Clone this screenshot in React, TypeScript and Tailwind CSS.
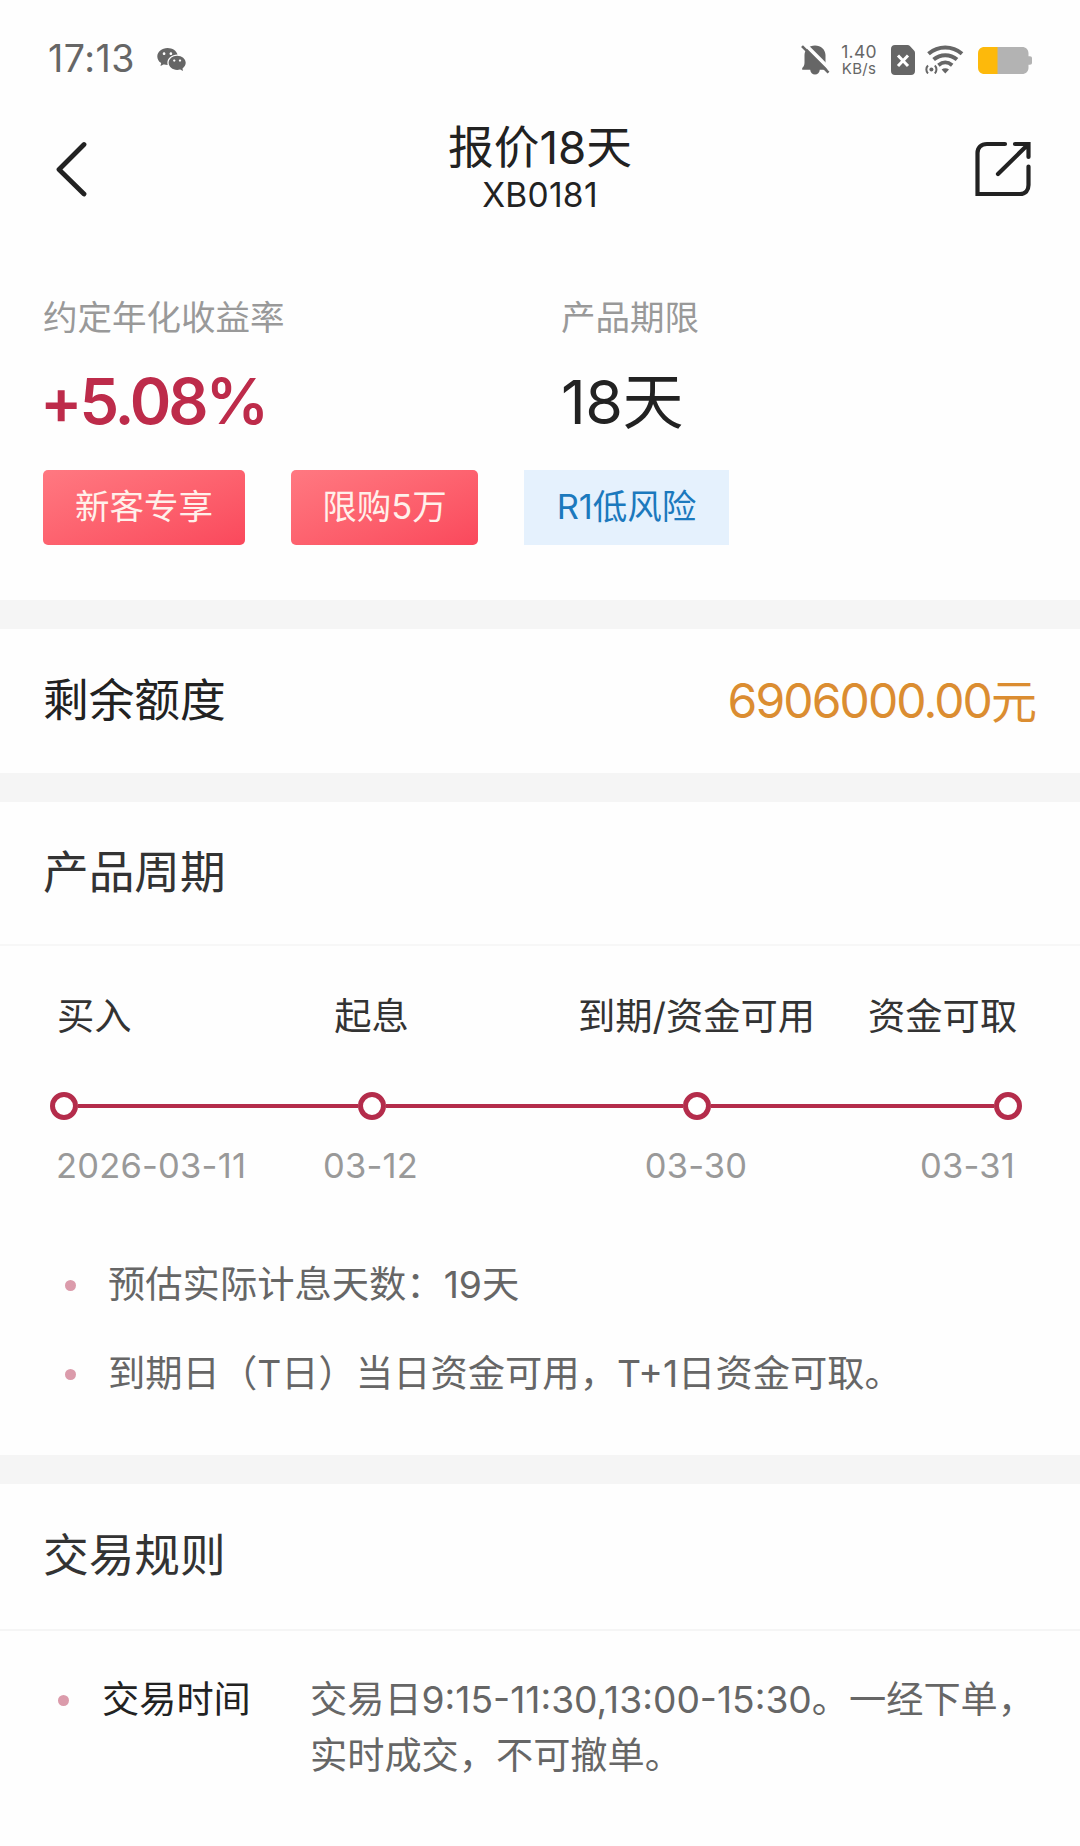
import { ReactNode } from "react";
import { RiWechatFill } from "react-icons/ri";

interface Stage {
  label: string;
  date: string;
  align: string;
}

const stages: Stage[] = [
  { label: "买入", date: "2026-03-11", align: "text-left" },
  { label: "起息", date: "03-12", align: "text-center" },
  { label: "到期/资金可用", date: "03-30", align: "text-center" },
  { label: "资金可取", date: "03-31", align: "text-right" },
];

const BellOffIcon = () => (
  <svg width="29" height="32" viewBox="0 0 29 32" fill="#666">
    <path d="M14 1.500c-6 0-10.300 4-10.500 9.500v7.500c0 2.600-.8 4.400-2.300 5.600v1.600h8c.3 2.900 2.200 4.800 4.800 4.800s4.500-1.900 4.800-4.800h8c-1.500-1.200-2.300-4.600-2.300-7.200V11C24.300 5.500 20 1.500 14 1.500Z" />
    <path d="M2.800-1 32 28.200" stroke="#fefefe" strokeWidth="3.600" />
    <path d="M1 2.200 27.500 28.700" stroke="#666" strokeWidth="2.600" />
  </svg>
);

const SimIcon = () => (
  <svg width="24" height="30" viewBox="0 0 24 30">
    <path
      d="M4 0h12.500c1 0 1.700.3 2.400 1l4.100 4.600c.7.7 1 1.400 1 2.400v18c0 2.500-1.500 4-4 4H4c-2.500 0-4-1.500-4-4V4c0-2.500 1.500-4 4-4Z"
      fill="#666"
    />
    <path d="m7 10.500 10 10.500M17 10.500 7 21" stroke="#fff" strokeWidth="3" />
  </svg>
);

const WifiIcon = () => (
  <svg width="39" height="29" viewBox="0 0 39 29" fill="none" stroke="#666">
    <path d="M3.500 8.800c9.800-8.300 23.700-8.300 33.500 0" strokeWidth="4" />
    <path d="M8.600 14.600c6.800-5.800 16.600-5.800 23.400 0" strokeWidth="4" />
    <path d="M13.400 20.200c4.300-3.500 9.500-3.500 13.800 0" strokeWidth="3.800" />
    <path d="m16.600 24.500 3.700 4 3.700-4c-2.200-1.600-5.200-1.600-7.400 0Z" fill="#666" stroke="none" />
    <circle cx="6.400" cy="24.500" r="2" fill="#666" stroke="none" />
    <path d="M3 20.600c-2.200 2-2.200 5.800 0 7.800M9.800 20.600c2.200 2 2.200 5.800 0 7.800" strokeWidth="2" />
  </svg>
);

const BatteryIcon = () => (
  <svg width="54" height="27" viewBox="0 0 54 27">
    <path
      d="M19 0h25c4 0 6.500 2.500 6.500 6.500v2.700H52c1.300 0 2 .8 2 2v4.600c0 1.200-.7 2-2 2h-1.500v2.700c0 4-2.500 6.500-6.500 6.500H19Z"
      fill="#b3b3b3"
    />
    <path d="M19.500 0v27H6.500C2.500 27 0 24.500 0 20.500v-14C0 2.500 2.500 0 6.500 0Z" fill="#fdb90b" />
  </svg>
);

const BackIcon = () => (
  <svg width="34" height="56" viewBox="0 0 34 56" fill="none">
    <path
      d="M29 3.500 4 28.500 29 53"
      stroke="#222"
      strokeWidth="4.800"
      strokeLinecap="round"
      strokeLinejoin="round"
    />
  </svg>
);

const ShareIcon = () => (
  <svg
    width="56"
    height="56"
    viewBox="0 0 56 56"
    fill="none"
    stroke="#222"
    strokeWidth="4.200"
    strokeLinecap="round"
  >
    <path d="M30 3H12C6 3 2.500 6.500 2.500 12v41H45c5.500 0 8.500-3.500 8.500-9V25.500" />
    <path d="M40 3h13.500v13M53 3.500 23 33" />
  </svg>
);

const Tag = ({ children, className }: { children: ReactNode; className: string }) => (
  <span className={`flex h-[75px] items-center justify-center pb-[1px] text-[34.5px] ${className}`}>
    {children}
  </span>
);

const SectionTitle = ({ children }: { children: ReactNode }) => (
  <h2 className="text-[45.7px] text-[#333]">{children}</h2>
);

const Divider = () => <div className="h-[29px] bg-[#f5f5f5]" />;

const Dot = () => <i className="size-[11px] shrink-0 rounded-full bg-[#db9bab]" />;

const Node = () => (
  <i className="size-7 shrink-0 rounded-full border-5 border-[#b42c4b] bg-white" />
);

const StatusBar = () => (
  <div className="flex h-[100px] items-center px-[48px] pt-[19px] text-[#666]">
    <span className="w-[108px] text-[37.5px] tracking-[0.5px]">17:13</span>
    <RiWechatFill className="size-[31px]" />
    <div className="ml-auto flex items-center">
      <BellOffIcon />
      <div className="mr-[2px] ml-[10px] flex w-[38px] flex-col items-center">
        <span className="text-[17.5px] leading-[18px] tracking-[0.3px]">1.40</span>
        <span className="text-[15px] leading-[16px] tracking-[0.3px]">KB/s</span>
      </div>
      <span className="ml-[11px]">
        <SimIcon />
      </span>
      <span className="ml-[10px]">
        <WifiIcon />
      </span>
      <span className="mt-[2px] ml-[14px]">
        <BatteryIcon />
      </span>
    </div>
  </div>
);

const NavBar = () => (
  <header className="grid h-[140px] grid-cols-[1fr_auto_1fr] items-start px-[49px] text-[#222]">
    <button className="mt-[41px] ml-[6px] justify-self-start">
      <BackIcon />
    </button>
    <div className="mt-[22px] flex flex-col items-center">
      <h1 className="text-[45.7px] leading-[52px]">报价18天</h1>
      <p className="text-[33.5px] leading-[42px] tracking-[0.3px]">XB0181</p>
    </div>
    <button className="mt-[41px] justify-self-end">
      <ShareIcon />
    </button>
  </header>
);

const Summary = () => (
  <section className="h-[360px] px-[43px] pt-[53px]">
    <div className="flex">
      <div className="w-[518px]">
        <p className="text-[34.5px] leading-[50px] text-[#999]">约定年化收益率</p>
        <p className="mt-[28px] -ml-[3px] text-[63px] leading-[60px] font-semibold tracking-[-3px] text-[#bd2b4a]">
          +5.08%
        </p>
      </div>
      <div>
        <p className="text-[34.5px] leading-[50px] text-[#999]">产品期限</p>
        <p className="mt-[29px] h-[59px] text-[61px] leading-[60px] text-[#222]">
          <span className="tracking-[-0.5px]">18</span>天
        </p>
      </div>
    </div>
    <div className="mt-[39px] flex gap-[46px]">
      <Tag className="w-[202px] rounded-[5px] bg-linear-to-br from-[#ff7881] to-[#fa485c] text-[#fff0ea]">
        新客专享
      </Tag>
      <Tag className="w-[187px] rounded-[5px] bg-linear-to-br from-[#ff7881] to-[#fa485c] text-[#fff0ea]">
        限购5万
      </Tag>
      <Tag className="w-[205px] bg-[#e5f1fd] text-[#1c79bd]">R1低风险</Tag>
    </div>
  </section>
);

const Cycle = () => (
  <>
    <div className="flex h-[144px] items-center border-b-2 border-[#f7f7f7] px-[43px]">
      <SectionTitle>产品周期</SectionTitle>
    </div>
    <section className="h-[509px] pt-[46px]">
      <div className="grid grid-cols-[161px_307px_343px_145px] pl-[57px] text-[37.3px] leading-[50px] whitespace-nowrap text-[#333]">
        {stages.map((stage) => (
          <span key={stage.label} className={stage.align}>
            {stage.label}
          </span>
        ))}
      </div>
      <div className="mt-[50px] flex h-7 items-center pr-[58px] pl-[50px]">
        <Node />
        <div className="h-1 w-[279.5px] bg-[#b42c4b]" />
        <Node />
        <div className="h-1 w-[297.5px] bg-[#b42c4b]" />
        <Node />
        <div className="h-1 flex-1 bg-[#b42c4b]" />
        <Node />
      </div>
      <div className="mt-[21px] grid grid-cols-[161px_307px_344px_147px] pl-[56px] text-[34.5px] leading-[50px] tracking-[0.2px] whitespace-nowrap text-[#999]">
        {stages.map((stage) => (
          <span key={stage.date} className={stage.align}>
            {stage.date}
          </span>
        ))}
      </div>
      <ul className="mt-[66px] flex flex-col gap-[33px] pl-[65px] text-[37.3px] leading-[56px] text-[#666]">
        <li className="flex items-center gap-[32px]">
          <Dot />
          <span>预估实际计息天数：19天</span>
        </li>
        <li className="flex items-center gap-[32px]">
          <Dot />
          <span>到期日（T日）当日资金可用，T+1日资金可取。</span>
        </li>
      </ul>
    </section>
  </>
);

const Rules = () => (
  <>
    <div className="flex h-[147px] items-center border-b-2 border-[#f5f5f5] px-[43px]">
      <SectionTitle>交易规则</SectionTitle>
    </div>
    <section className="flex pt-[41px] pl-[58px] text-[37.2px] leading-[56px]">
      <div className="flex h-[56px] w-[252px] items-center gap-[33px] text-[#222]">
        <Dot />
        交易时间
      </div>
      <p className="whitespace-nowrap text-[#666]">
        交易日9:15-11:30,13:00-15:30。一经下单，
        <br />
        实时成交，不可撤单。
      </p>
    </section>
  </>
);

export default function App() {
  return (
    <div
      lang="zh-CN"
      className="h-[1846px] w-[1080px] overflow-hidden bg-[#fefefe] font-['Inter','Noto_Sans_CJK_SC',sans-serif]"
    >
      <StatusBar />
      <NavBar />
      <Summary />
      <Divider />
      <section className="flex h-[144px] items-center justify-between px-[43px]">
        <h2 className="text-[45.7px] text-[#222]">剩余额度</h2>
        <p className="text-[46px] text-[#db8d31]">
          <span className="text-[48px] tracking-[-1.9px]">6906000.00</span>元
        </p>
      </section>
      <Divider />
      <Cycle />
      <Divider />
      <Rules />
    </div>
  );
}
